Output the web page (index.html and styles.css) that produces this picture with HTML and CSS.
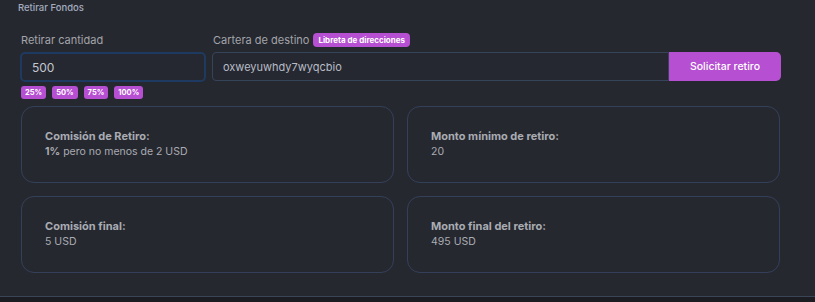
FILE: index.html
```html
<!DOCTYPE html>
<html lang="es">
<head>
    <meta charset="UTF-8" />
    <meta name="viewport" content="width=device-width, initial-scale=1.0" />
    <title>Retirar Fondos</title>
    <link rel="stylesheet" href="styles.css">
</head>
<body>
    <div class="panel">
        <h2 class="title">Retirar Fondos</h2>

        <div class="form-row">
            <div class="amount-col">
                <label class="field-label" for="amount">Retirar cantidad</label>
                <input type="text" id="amount" class="amount-input" value="500" />
                <div class="chips">
                    <span class="chip">25%</span>
                    <span class="chip">50%</span>
                    <span class="chip">75%</span>
                    <span class="chip">100%</span>
                </div>
            </div>
            <div class="wallet-col">
                <div class="label-row">
                    <label class="field-label" for="wallet">Cartera de destino</label>
                    <span class="badge">Libreta de direcciones</span>
                </div>
                <div class="wallet-group">
                    <input type="text" id="wallet" class="wallet-input" value="oxweyuwhdy7wyqcbio" />
                    <button class="submitBtn">Solicitar retiro</button>
                </div>
            </div>
        </div>

        <div class="cards">
            <div class="card">
                <p class="card-title">Comisión de Retiro:</p>
                <p class="card-value"><b>1%</b> pero no menos de 2 USD</p>
            </div>
            <div class="card">
                <p class="card-title">Monto mínimo de retiro:</p>
                <p class="card-value">20</p>
            </div>
            <div class="card">
                <p class="card-title">Comisión final:</p>
                <p class="card-value">5 USD</p>
            </div>
            <div class="card">
                <p class="card-title">Monto final del retiro:</p>
                <p class="card-value">495 USD</p>
            </div>
        </div>
    </div>
</body>
</html>
```

FILE: styles.css
```css
* {
    margin: 0;
    padding: 0;
    box-sizing: border-box;
    font-family: 'Inter', 'Roboto', sans-serif;
}

body {
    background-color: #1c1d22;
    height: 302px;
    overflow: hidden;
}

.panel {
    background-color: #262830;
    height: 297px;
    border-bottom: 1px solid #3a4658;
    padding: 1px 34px 0 20px;
}

.title {
    font-size: 9.5px;
    font-weight: 500;
    color: #a3acbf;
    margin-left: -2px;
    height: 14px;
    line-height: 14px;
}

.form-row {
    display: flex;
    gap: 6px;
    margin-top: 17px;
}

.amount-col {
    width: 186px;
}

.field-label {
    display: block;
    font-size: 11px;
    color: #a2a4a9;
    height: 20px;
    line-height: 16px;
    padding-left: 1px;
}

.amount-input {
    width: 100%;
    height: 30px;
    background-color: #252830;
    border: 2px solid #1f3a60;
    border-radius: 5px;
    color: #c2c6cf;
    font-size: 12px;
    padding: 0 10px;
    outline: none;
}

.chips {
    display: flex;
    gap: 6px;
    margin-top: 4px;
    padding-left: 1px;
}

.chip {
    background-color: #b64fd1;
    color: #ffffff;
    font-size: 7.5px;
    font-weight: 700;
    height: 13px;
    line-height: 13px;
    padding: 0 4px;
    border-radius: 3px;
}

.wallet-col {
    flex: 1;
}

.label-row {
    display: flex;
    align-items: flex-start;
    gap: 4px;
    height: 20px;
}

.badge {
    background-color: #b64fd1;
    color: #ffffff;
    font-size: 8px;
    font-weight: 700;
    height: 14px;
    line-height: 14px;
    padding: 0 5px;
    margin-top: 1px;
    border-radius: 4px;
}

.wallet-group {
    display: flex;
    height: 29px;
}

.wallet-input {
    flex: 1;
    background-color: #252830;
    border: 1px solid #36445a;
    border-radius: 4px 0 0 4px;
    color: #b8bcc6;
    font-size: 11px;
    padding: 0 10px;
    outline: none;
}

.submitBtn {
    width: 112px;
    background-color: #b64fd1;
    border: none;
    border-radius: 0 5px 5px 0;
    color: #ffffff;
    font-size: 10.5px;
    font-weight: 500;
    cursor: pointer;
}

.cards {
    display: grid;
    grid-template-columns: 1fr 1fr;
    grid-auto-rows: 77px;
    gap: 13px;
    margin-top: 7px;
    padding-left: 1px;
    margin-right: 1px;
}

.card {
    border: 1px solid #34405a;
    border-radius: 13px;
    padding: 0 23px 1px;
    display: flex;
    flex-direction: column;
    justify-content: center;
}

.card-title {
    font-size: 11px;
    font-weight: 700;
    color: #a9acb2;
    line-height: 16px;
}

.card-value {
    font-size: 10.5px;
    color: #a9acb2;
    line-height: 16px;
}

.card-value b {
    font-weight: 700;
}
```
